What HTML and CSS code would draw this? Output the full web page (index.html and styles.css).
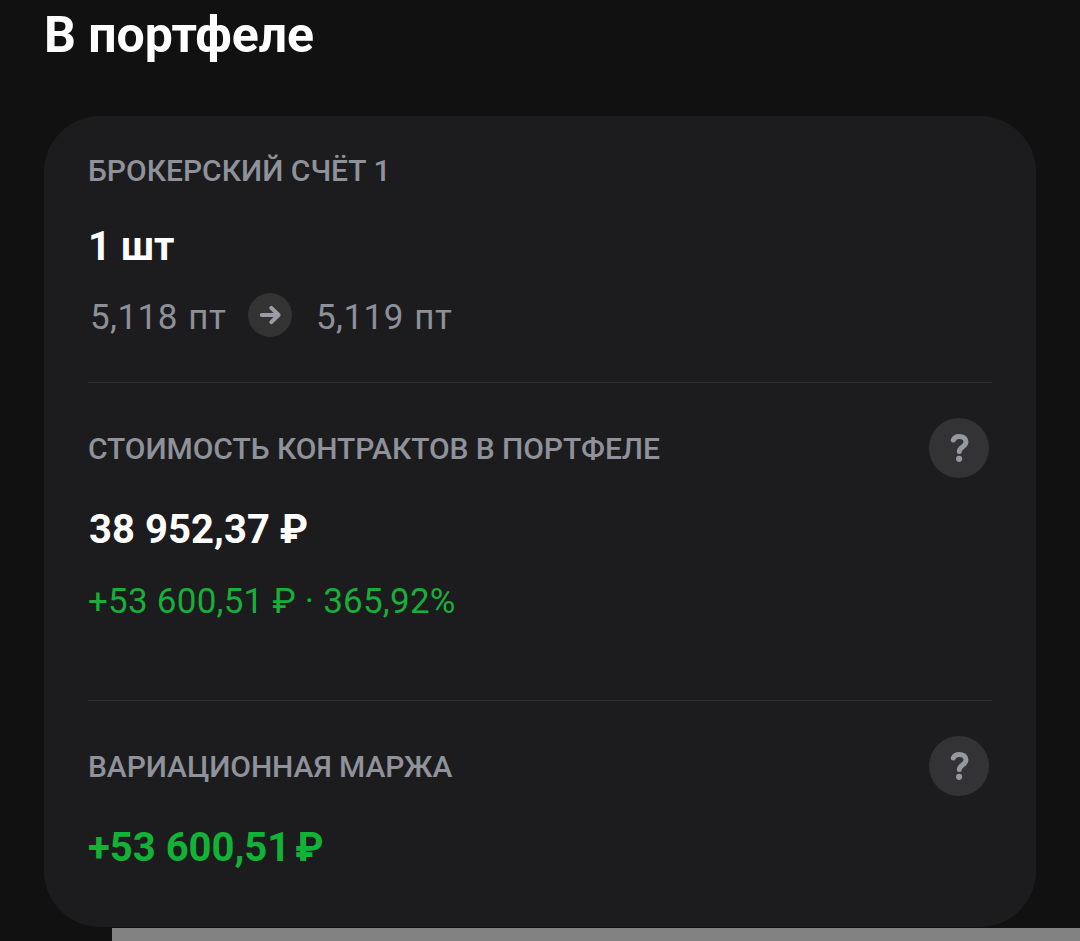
FILE: index.html
```html
<!DOCTYPE html>
<html lang="ru">
<head>
<meta charset="utf-8">
<title>В портфеле</title>
<link rel="stylesheet" href="styles.css">
</head>
<body>
<main class="page">
  <h1 class="title">В портфеле</h1>
  <div class="card">
    <section class="section account">
      <h2 class="label label-account">БРОКЕРСКИЙ СЧЁТ 1</h2>
      <p class="value quantity">1 шт</p>
      <div class="points">
        <span class="from">5,118 пт</span>
        <svg class="arrow" viewBox="0 0 44 44"><circle cx="22" cy="22" r="22" fill="#333334"/><path d="M13.8 22H30M23.3 14.8L30.6 22L23.3 29.2" fill="none" stroke="#9b9da5" stroke-width="4" stroke-linecap="round" stroke-linejoin="round"/></svg>
        <span class="to">5,119 пт</span>
      </div>
    </section>
    <section class="section contracts">
      <div class="head"><h2 class="label">СТОИМОСТЬ КОНТРАКТОВ В ПОРТФЕЛЕ</h2><button class="help" aria-label="Справка"><svg class="help-icon" viewBox="0 0 60 60"><path d="M24.3 21.9C25.3 19.6 27.3 18.4 30.2 18.4C34 18.4 37 20.4 37 23.8C37 28.9 30.3 28.9 30.3 33.5" fill="none" stroke="#9698a0" stroke-width="5" stroke-linecap="round"/><circle cx="30.1" cy="40.8" r="3.1" fill="#9698a0"/></svg></button></div>
      <p class="value cost">38 952,37 ₽</p>
      <p class="gain">+53 600,51 ₽ · 365,92%</p>
    </section>
    <section class="section margin">
      <div class="head"><h2 class="label">ВАРИАЦИОННАЯ МАРЖА</h2><button class="help" aria-label="Справка"><svg class="help-icon" viewBox="0 0 60 60"><path d="M24.3 21.9C25.3 19.6 27.3 18.4 30.2 18.4C34 18.4 37 20.4 37 23.8C37 28.9 30.3 28.9 30.3 33.5" fill="none" stroke="#9698a0" stroke-width="5" stroke-linecap="round"/><circle cx="30.1" cy="40.8" r="3.1" fill="#9698a0"/></svg></button></div>
      <p class="value profit">+53 600,51<span class="currency">₽</span></p>
    </section>
  </div>
  <div class="bottom-bar"></div>
</main>
</body>
</html>
```
FILE: styles.css
```css
* { box-sizing: border-box; }
body, h1, h2, p { margin: 0; }
body { background: #111112; font-family: Roboto, sans-serif; color: #fff; }
.page { height: 941px; overflow: hidden; display: flex; flex-direction: column; }
.title { margin: 5px 0 0 44px; height: 111px; font-size: 50px; line-height: 60px; font-weight: 700; letter-spacing: -0.05px; white-space: nowrap; }
.card { flex: none; margin: 0 44px 1px; width: 992px; height: 811px; padding: 0 44px; border-radius: 56px; background: #1c1c1e; }
.section { white-space: nowrap; }
.account { height: 267px; padding-top: 36px; border-bottom: 1px solid #303032; }
.label { font-size: 30px; line-height: 38px; font-weight: 500; letter-spacing: -0.08px; color: #8f919b; }
.label-account { letter-spacing: 0; }
.value { font-size: 40px; line-height: 48px; font-weight: 700; }
.quantity { margin-top: 33px; }
.points { display: flex; align-items: center; height: 44px; margin-top: 22px; padding-left: 2px; font-size: 35px; line-height: 44px; letter-spacing: 0.45px; word-spacing: 1.4px; color: #8e9099; }
.from, .to { padding-top: 5px; }
.from { width: 134px; }
.arrow { width: 44px; height: 44px; margin: 0 24px; }
.contracts { height: 318px; padding-top: 35px; border-bottom: 1px solid #303032; }
.margin { padding-top: 35px; }
.head { display: flex; justify-content: space-between; align-items: center; height: 60px; padding-right: 3px; }
.head .label { padding-top: 2px; }
.help { width: 60px; height: 60px; padding: 0; border: 0; border-radius: 50%; background: #333335; }
.help-icon { display: block; width: 60px; height: 60px; }
.cost { margin-top: 28px; padding-left: 1px; letter-spacing: 0.05px; }
.gain { margin-top: 26px; font-size: 35px; line-height: 44px; letter-spacing: 0.24px; color: #17ae39; }
.profit { margin-top: 28px; color: #12b236; }
.currency { margin-left: 5px; }
.bottom-bar { flex: none; height: 13px; margin-left: 112px; background: #838282; }
```
